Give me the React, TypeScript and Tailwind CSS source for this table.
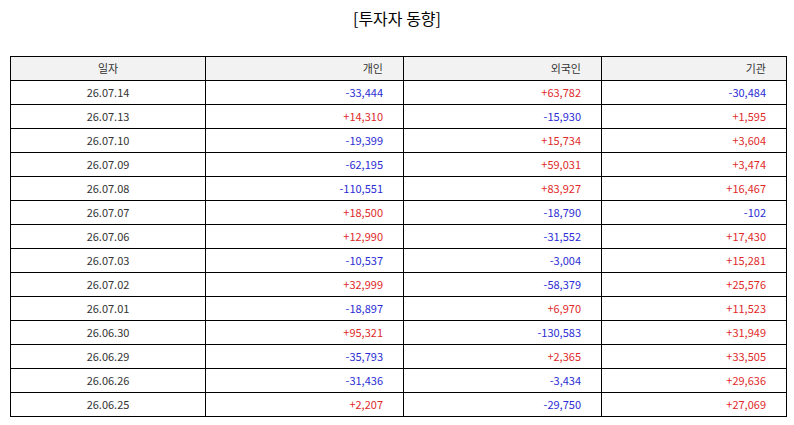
import React from 'react';

interface Row {
  date: string;
  individual: number;
  foreign: number;
  institution: number;
}

const rows: Row[] = [
  { date: '26.07.14', individual: -33444, foreign: 63782, institution: -30484 },
  { date: '26.07.13', individual: 14310, foreign: -15930, institution: 1595 },
  { date: '26.07.10', individual: -19399, foreign: 15734, institution: 3604 },
  { date: '26.07.09', individual: -62195, foreign: 59031, institution: 3474 },
  { date: '26.07.08', individual: -110551, foreign: 83927, institution: 16467 },
  { date: '26.07.07', individual: 18500, foreign: -18790, institution: -102 },
  { date: '26.07.06', individual: 12990, foreign: -31552, institution: 17430 },
  { date: '26.07.03', individual: -10537, foreign: -3004, institution: 15281 },
  { date: '26.07.02', individual: 32999, foreign: -58379, institution: 25576 },
  { date: '26.07.01', individual: -18897, foreign: 6970, institution: 11523 },
  { date: '26.06.30', individual: 95321, foreign: -130583, institution: 31949 },
  { date: '26.06.29', individual: -35793, foreign: 2365, institution: 33505 },
  { date: '26.06.26', individual: -31436, foreign: -3434, institution: 29636 },
  { date: '26.06.25', individual: 2207, foreign: -29750, institution: 27069 },
];

const formatSigned = (value: number) =>
  (value > 0 ? '+' : '') + value.toLocaleString('en-US');

const ValueCell: React.FC<{ value: number }> = ({ value }) => (
  <td
    className={
      'border-[1.5px] border-black pr-[20px] text-right ' +
      (value < 0 ? 'text-[#2c2cd4]' : 'text-[#e02a2a]')
    }
  >
    {formatSigned(value)}
  </td>
);

export default function App() {
  return (
    <div
      className="w-[794px] h-[425px] bg-white text-[#333]"
      style={{ fontFamily: '"Noto Sans CJK KR", "Noto Sans", sans-serif' }}
    >
      <h1 className="pt-[6px] text-center text-[16px] leading-[24px] text-black">
        [투자자 동향]
      </h1>

      <table className="ml-[10px] mt-[26px] w-[776px] table-fixed border-collapse text-[11px]">
        <colgroup>
          <col className="w-[195px]" />
          <col className="w-[198px]" />
          <col className="w-[198px]" />
          <col className="w-[185px]" />
        </colgroup>
        <thead>
          <tr className="h-[24px] bg-[#f2f2f2]">
            <th className="border-[1.5px] border-black text-center font-normal">일자</th>
            <th className="border-[1.5px] border-black pr-[20px] text-right font-normal">개인</th>
            <th className="border-[1.5px] border-black pr-[20px] text-right font-normal">외국인</th>
            <th className="border-[1.5px] border-black pr-[20px] text-right font-normal">기관</th>
          </tr>
        </thead>
        <tbody>
          {rows.map(row => (
            <tr key={row.date} className="h-[24px]">
              <td className="border-[1.5px] border-black text-center">{row.date}</td>
              <ValueCell value={row.individual} />
              <ValueCell value={row.foreign} />
              <ValueCell value={row.institution} />
            </tr>
          ))}
        </tbody>
      </table>
    </div>
  );
}
